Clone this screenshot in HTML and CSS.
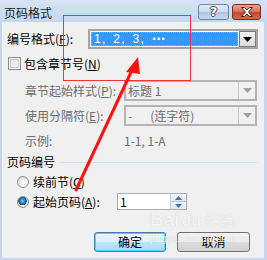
FILE: index.html
```html
<!DOCTYPE html>
<html lang="zh">
<head>
<meta charset="utf-8">
<title>页码格式</title>
<link rel="stylesheet" href="styles.css">
</head>
<body>
<div class="window">
  <div class="titlebar">
    <span class="title">页码格式</span>
    <div class="caption-btns">
      <div class="cap help"><span class="qmark">?</span></div>
      <div class="cap close">
        <svg width="14" height="10" viewBox="0 0 14 10"><path d="M1.5 0.5h3l2.5 2.6 2.5-2.6h3l-4 4.5 4 4.5h-3l-2.5-2.6-2.5 2.6h-3l4-4.5z" fill="#fff" stroke="#5a1d14" stroke-width="1" stroke-linejoin="round"/></svg>
      </div>
    </div>
  </div>
  <div class="client">
    <div class="row r1">
      <span class="lbl lbl-fmt">编号格式(<u>F</u>):</span>
      <div class="combo combo-active">
        <div class="field"><span class="sel">1, 2, 3, <span class="dots">···</span></span></div>
        <div class="drop"><svg width="9" height="5" viewBox="0 0 9 5"><path d="M0 0h9L4.5 5z" fill="#000"/></svg></div>
      </div>
    </div>
    <div class="row r2">
      <span class="checkbox"></span>
      <span class="lbl">包含章节号(<u>N</u>)</span>
    </div>
    <div class="row r3 disabled">
      <span class="lbl lbl-sub">章节起始样式(<u>P</u>):</span>
      <div class="combo combo-off">
        <div class="field"><span class="val">标题 1</span></div>
        <div class="drop"><svg width="9" height="5" viewBox="0 0 9 5"><path d="M0 0h9L4.5 5z" fill="#a0a0a0"/></svg></div>
      </div>
    </div>
    <div class="row r4 disabled">
      <span class="lbl lbl-sub">使用分隔符(<u>E</u>):</span>
      <div class="combo combo-off">
        <div class="field"><span class="val">-</span><span class="val val-2">(连字符)</span></div>
        <div class="drop"><svg width="9" height="5" viewBox="0 0 9 5"><path d="M0 0h9L4.5 5z" fill="#a0a0a0"/></svg></div>
      </div>
    </div>
    <div class="row r5 disabled">
      <span class="lbl lbl-sub">示例:</span>
      <span class="example">1-1, 1-A</span>
    </div>
    <div class="row section">
      <span class="lbl">页码编号</span>
      <span class="sep"></span>
    </div>
    <div class="row radio-row rr1">
      <span class="radio"></span>
      <span class="lbl">续前节(<u>C</u>)</span>
    </div>
    <div class="row radio-row rr2">
      <span class="radio checked"></span>
      <span class="lbl lbl-start">起始页码(<u>A</u>):</span>
      <div class="spin">
        <span class="spin-val">1</span>
        <div class="spin-btns">
          <span class="sb"><svg width="7" height="4" viewBox="0 0 7 4"><path d="M0 4h7L3.5 0z" fill="#4d6fae"/></svg></span>
          <span class="sb"><svg width="7" height="4" viewBox="0 0 7 4"><path d="M0 0h7L3.5 4z" fill="#4d6fae"/></svg></span>
        </div>
      </div>
    </div>
    <div class="row buttons">
      <div class="btn btn-default">确定</div>
      <div class="btn">取消</div>
    </div>
  </div>

  <div class="watermark">
    <div class="wm-top"><span class="wm-bai">Bai</span><span class="wm-du">du</span><span class="wm-jy">经验</span></div>
    <div class="wm-url">jingyan.baidu.com</div>
  </div>

  <div class="annot-rect"></div>
  <svg class="annot-arrow" width="267" height="260" viewBox="0 0 267 260">
    <line x1="76" y1="190" x2="133" y2="68" stroke="#ff1010" stroke-width="3" stroke-linecap="round"/>
    <path d="M138 57 L126 72 L140 74 Z" fill="#ff1010"/>
  </svg>
</div>
</body>
</html>
```
FILE: styles.css
```css
* { box-sizing: border-box; margin: 0; padding: 0; }
html, body { width: 267px; height: 260px; overflow: hidden; }
body {
  font-family: "Noto Sans CJK SC", "Liberation Sans", sans-serif;
  font-size: 12px;
  line-height: 14px;
  color: #000;
  background: #fff;
}
u { text-decoration: underline; }

.window {
  position: relative;
  width: 267px;
  height: 260px;
  background: #c4d7ee;
  display: flex;
  flex-direction: column;
  padding: 0 3px 2px 2px;
}

/* title bar */
.titlebar {
  height: 22px;
  margin: 0 -3px 0 -2px;
  padding: 4px 6px 0 4px;
  display: flex;
  justify-content: space-between;
  align-items: flex-start;
  background: linear-gradient(#d6e4f5, #c3d7ee);
}
.title { margin-top: 2px; font-size: 12px; color: #1a1a1a; }
.caption-btns { display: flex; gap: 3px; }
.cap {
  height: 16px;
  border-radius: 3px;
  display: flex;
  align-items: center;
  justify-content: center;
}
.help {
  width: 31px;
  border: 1px solid #6d85a5;
  background: linear-gradient(#e4edf8 0%, #c9d9ee 50%, #aec4e0 51%, #c5d8ef 100%);
}
.qmark {
  font-family: "DejaVu Sans", sans-serif;
  font-weight: bold;
  font-size: 13px;
  line-height: 14px;
  color: #fff;
  text-shadow: 1px 0 0 #3c4c66, -1px 0 0 #3c4c66, 0 1px 0 #3c4c66, 0 -1px 0 #3c4c66;
}
.close {
  width: 29px;
  border: 1px solid #7f2d22;
  background: linear-gradient(#e8a497 0%, #d9735f 45%, #c4452e 55%, #d46a4f 100%);
}

/* client area */
.client {
  flex: 1;
  background: #f0f0f0;
  padding: 7px 6px 0 5px;
  display: flex;
  flex-direction: column;
}
.row { display: flex; align-items: center; }
.lbl { white-space: nowrap; }
.disabled { color: #6d6d6d; }

.r1 { height: 20px; }
.lbl-fmt { width: 81px; }
.combo { display: flex; height: 100%; }
.combo-active {
  flex: 1;
  border: 2px solid #a5a5a5;
  background: #fff;
  padding: 1px;
}
.combo-active .field { flex: 1; display: flex; align-items: center; padding-right: 1px; }
.sel {
  display: block;
  width: 100%;
  height: 14px;
  background: #3399ff;
  outline: 1px dotted #ff9a1a;
  outline-offset: -1px;
  color: #fff;
  font-family: "Liberation Sans", sans-serif;
  word-spacing: 2px;
  letter-spacing: 1.3px;
  padding-left: 3px;
  line-height: 14px;
}
.dots { font-family: "DejaVu Sans", sans-serif; font-weight: bold; letter-spacing: 0; }
.combo-active .drop {
  width: 17px;
  margin: -1px -1px -1px 0;
  border: 1px solid #7a7a7a;
  background: linear-gradient(#f2f2f2, #dcdcdc);
  display: flex;
  align-items: center;
  justify-content: center;
}

.r2 { height: 15px; margin-top: 7px; }
.checkbox {
  width: 13px;
  height: 13px;
  margin-left: 1px;
  margin-right: 3px;
  border: 1px solid #8f8f8f;
  background: linear-gradient(135deg, #dcdcdc, #fbfbfb);
  box-shadow: inset 0 0 0 1px #f4f4f4, inset 0 0 0 2px #c9c9c9;
}

.r3 { height: 21px; margin-top: 9px; }
.r4 { height: 21px; margin-top: 4px; }
.lbl-sub { width: 117px; padding-left: 18px; }
.combo-off {
  width: 133px;
  border: 2px solid #b4b4b4;
  background: #f0f0f0;
}
.combo-off .field { flex: 1; display: flex; align-items: center; padding-left: 2px; }
.combo-off .val { color: #6d6d6d; }
.val-2 { margin-left: 18px; }
.combo-off .drop {
  width: 17px;
  border-left: 1px solid #c8c8c8;
  display: flex;
  align-items: center;
  justify-content: center;
}

.r5 { height: 14px; margin-top: 8px; }
.example { color: #6d6d6d; }

.section { height: 14px; margin-top: 7px; }
.sep { flex: 1; height: 1px; margin: 1px 1px 0 5px; background: #d5dfe6; }

.radio-row { padding-left: 10px; }
.rr1 { height: 14px; margin-top: 6px; }
.rr2 { height: 17px; margin-top: 4px; }
.radio {
  width: 12px;
  height: 12px;
  border-radius: 50%;
  border: 1px solid #8e8f8f;
  background: radial-gradient(circle at 60% 65%, #f6f6f6 30%, #d4d4d4 90%);
  margin-right: 4px;
  flex: none;
}
.radio.checked {
  background:
    radial-gradient(circle at 45% 40%, #8fd0f5 0, #2d8ad0 2px, #15508c 4px, transparent 4.5px),
    radial-gradient(circle at 60% 65%, #f6f6f6 30%, #d4d4d4 90%);
}
.lbl-start { width: 84px; }
.spin {
  width: 70px;
  height: 17px;
  border: 1px solid #abadb3;
  background: #fff;
  display: flex;
}
.spin-val { flex: 1; padding-left: 2px; line-height: 15px; }
.spin-btns {
  width: 16px;
  display: flex;
  flex-direction: column;
  border-left: 1px solid #c8d0dc;
}
.sb {
  flex: 1;
  display: flex;
  align-items: center;
  justify-content: center;
  background: linear-gradient(#f3f6fb, #dfe6f0);
  border-bottom: 1px solid #b9c4d4;
}
.sb:last-child { border-bottom: none; }

.buttons {
  height: 20px;
  margin-top: 22px;
  justify-content: flex-end;
  gap: 11px;
  padding-right: 8px;
}
.btn {
  width: 73px;
  height: 20px;
  border: 1px solid #707070;
  border-radius: 3px;
  background: linear-gradient(#f2f2f2 0%, #ebebeb 50%, #dddddd 51%, #cfcfcf 100%);
  display: flex;
  align-items: center;
  justify-content: center;
  font-size: 12px;
}
.btn-default {
  width: 72px;
  border-color: #3c7fb1;
  box-shadow: inset 0 0 0 1px #48d4fc;
  background: linear-gradient(#eaf6fd 0%, #d9f0fc 50%, #bee6fd 51%, #a7d9f5 100%);
}

/* watermark */
.watermark {
  position: absolute;
  left: 150px;
  top: 209px;
  width: 90px;
  color: rgba(255, 255, 255, 0.8);
  text-shadow: 0 0 1px rgba(120, 120, 120, 0.35);
  pointer-events: none;
}
.wm-top { display: flex; align-items: baseline; height: 22px; }
.wm-bai { font-family: "Liberation Sans", sans-serif; font-weight: bold; font-size: 19px; line-height: 22px; }
.wm-du { font-family: "Liberation Sans", sans-serif; font-weight: bold; font-size: 16px; line-height: 22px; margin-left: 2px; }
.wm-jy { font-size: 15px; line-height: 22px; margin-left: 4px; }
.wm-url { font-family: "Liberation Sans", sans-serif; font-size: 10px; line-height: 12px; margin-top: 2px; letter-spacing: 0.3px; }

/* red annotation */
.annot-rect {
  position: absolute;
  left: 63px;
  top: 15px;
  width: 128px;
  height: 66px;
  border: 1px solid #ee3636;
}
.annot-arrow { position: absolute; left: 0; top: 0; }
```
